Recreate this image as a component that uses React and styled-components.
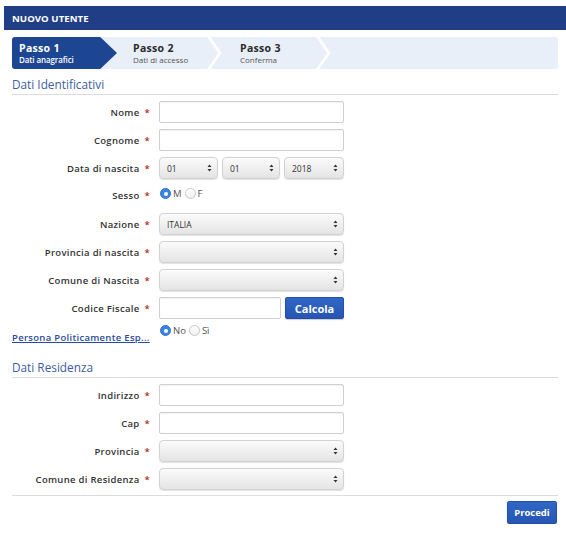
import React from "react";
import styled, { createGlobalStyle } from "styled-components";

const Global = createGlobalStyle`
  html, body { margin: 0; padding: 0; background: #fff; }
  body { font-family: "Open Sans", "Liberation Sans", sans-serif; color: #333; }
  * { box-sizing: border-box; }
`;

const Page = styled.div`
  width: 566px;
  padding-top: 6px;
`;

const Header = styled.div`
  margin-left: 4px;
  height: 24px;
  background: #1f3e85;
  display: flex;
  align-items: center;
  padding-left: 8px;
  color: #fff;
  font-weight: 700;
  font-size: 9.6px;
  letter-spacing: 0.05px;
`;

const Body = styled.div`
  padding: 0 8px 0 12px;
`;

const Steps = styled.div`
  margin-top: 7px;
  height: 32px;
  background: #e9eff9;
  border-radius: 3px;
  display: flex;
`;

const Step = styled.div`
  width: ${(p) => p.$w}px;
  height: 32px;
  display: flex;
  align-items: center;
  justify-content: space-between;
  padding-left: ${(p) => p.$pl}px;
  background: ${(p) => (p.$active ? "#1c4592" : "transparent")};
  border-radius: ${(p) => (p.$active ? "3px 0 0 3px" : "0")};
  clip-path: ${(p) =>
    p.$active ? "polygon(0 0, 84% 0, 100% 50%, 84% 100%, 0 100%)" : "none"};
`;

const StepText = styled.div`
  display: flex;
  flex-direction: column;
  line-height: 1.15;
`;

const StepTitle = styled.span`
  font-size: 10.5px;
  font-weight: 700;
  letter-spacing: 0.3px;
  color: ${(p) => (p.$active ? "#fff" : "#2b2b2b")};
`;

const StepSub = styled.span`
  font-size: 8px;
  font-weight: ${(p) => (p.$active ? 600 : 400)};
  letter-spacing: ${(p) => (p.$active ? "-0.1px" : "0")};
  color: ${(p) => (p.$active ? "#fff" : "#555")};
  margin-top: 1px;
`;

const Chevron = () => (
  <svg width="15" height="32" viewBox="0 0 15 32">
    <polyline points="1,-1 13,16 1,33" fill="none" stroke="#fff" strokeWidth="2.6" />
  </svg>
);

const SectionTitle = styled.div`
  margin-top: ${(p) => p.$mt}px;
  height: 20px;
  line-height: 18px;
  font-size: 11.8px;
  color: #3d5d9e;
  border-bottom: 1px solid #dcdcdc;
  padding-bottom: 1px;
`;

const Form = styled.div`
  margin-top: 6px;
  display: flex;
  flex-direction: column;
  gap: 6px;
`;

const Row = styled.div`
  display: grid;
  grid-template-columns: 138px 185px;
  column-gap: 9px;
  height: 22px;
  align-items: ${(p) => (p.$top ? "start" : "center")};
`;

const Label = styled.div`
  text-align: right;
  font-size: 9.5px;
  font-weight: 600;
  letter-spacing: 0.3px;
  color: #333;
  white-space: nowrap;
  padding-top: ${(p) => p.$pt || 0}px;
`;

const Star = styled.span`
  color: #b3261e;
  margin-left: 5px;
`;

const Input = styled.div`
  height: 22px;
  width: ${(p) => p.$w || 185}px;
  border: 1px solid #cfcfcf;
  border-radius: 2px;
  background: #fff;
  box-shadow: inset 0 1px 1px rgba(0, 0, 0, 0.05);
`;

const SelectBox = styled.div`
  height: 22px;
  width: ${(p) => p.$w || 185}px;
  display: flex;
  align-items: center;
  justify-content: space-between;
  padding: 0 5px 0 7px;
  border: 1px solid #d2d2d2;
  border-radius: 4px;
  background: linear-gradient(#fbfbfb, #e4e4e4);
  box-shadow: 0 1px 1px rgba(0, 0, 0, 0.12);
  font-size: 8.5px;
  color: #333;
`;

const Arrows = () => (
  <svg width="5" height="8" viewBox="0 0 5 8">
    <path d="M2.5 0.5 L4.5 3 L0.5 3 Z M2.5 7.5 L4.5 5 L0.5 5 Z" fill="#333" />
  </svg>
);

const Select = ({ w, value }) => (
  <SelectBox $w={w}>
    <span>{value}</span>
    <Arrows />
  </SelectBox>
);

const Inline = styled.div`
  display: flex;
  gap: ${(p) => p.$gap || 4}px;
  align-items: center;
`;

const Radios = styled.div`
  display: flex;
  align-items: center;
  gap: 2px;
  margin-top: ${(p) => p.$mt || 0}px;
  font-size: 9.5px;
  color: #555;
`;

const RadioDot = styled.span`
  width: 11px;
  height: 11px;
  border-radius: 50%;
  display: inline-flex;
  align-items: center;
  justify-content: center;
  margin-left: 1px;
  background: ${(p) => (p.$on ? "#3a82e3" : "linear-gradient(#fff, #f0f0f0)")};
  border: 1px solid ${(p) => (p.$on ? "#2f74d6" : "#c8c8c8")};
  &::after {
    content: "";
    width: 4px;
    height: 4px;
    border-radius: 50%;
    background: ${(p) => (p.$on ? "#fff" : "transparent")};
  }
`;

const Button = styled.button`
  height: ${(p) => p.$h}px;
  width: ${(p) => p.$w}px;
  border: 1px solid #244fa8;
  border-radius: 2px;
  background: linear-gradient(#3066c6, #2755b3);
  color: #fff;
  font-family: "Open Sans", "Liberation Sans", sans-serif;
  font-weight: 700;
  font-size: ${(p) => p.$fs}px;
  padding: 0;
  box-shadow: 0 1px 1px rgba(0, 0, 0, 0.2);
`;

const Link = styled.a`
  display: block;
  white-space: nowrap;
  font-size: 9.5px;
  font-weight: 600;
  letter-spacing: 0.3px;
  color: #2b4c9c;
  text-decoration: underline;
  padding-top: 6px;
`;

const Footer = styled.div`
  margin-top: 5px;
  border-top: 1px solid #dcdcdc;
  padding-top: 5px;
  display: flex;
  justify-content: flex-end;
  padding-right: 1px;
`;

const Field = ({ label, children, top, pt }) => (
  <Row $top={top}>
    <Label $pt={pt}>
      {label}
      <Star>*</Star>
    </Label>
    {children}
  </Row>
);

export default function App() {
  return (
    <Page>
      <Global />
      <Header>NUOVO UTENTE</Header>
      <Body>
        <Steps>
          <Step $w={105} $pl={7} $active>
            <StepText>
              <StepTitle $active>Passo 1</StepTitle>
              <StepSub $active>Dati anagrafici</StepSub>
            </StepText>
          </Step>
          <Step $w={105} $pl={16}>
            <StepText>
              <StepTitle>Passo 2</StepTitle>
              <StepSub>Dati di accesso</StepSub>
            </StepText>
            <Chevron />
          </Step>
          <Step $w={109} $pl={18}>
            <StepText>
              <StepTitle>Passo 3</StepTitle>
              <StepSub>Conferma</StepSub>
            </StepText>
            <Chevron />
          </Step>
        </Steps>

        <SectionTitle $mt={6}>Dati Identificativi</SectionTitle>
        <Form>
          <Field label="Nome">
            <Input />
          </Field>
          <Field label="Cognome">
            <Input />
          </Field>
          <Field label="Data di nascita">
            <Inline $gap={4}>
              <Select w={59} value="01" />
              <Select w={58} value="01" />
              <Select w={60} value="2018" />
            </Inline>
          </Field>
          <Field label="Sesso" top pt={4}>
            <Radios $mt={2}>
              <RadioDot $on />M<RadioDot />F
            </Radios>
          </Field>
          <Field label="Nazione">
            <Select value="ITALIA" />
          </Field>
          <Field label="Provincia di nascita">
            <Select value="" />
          </Field>
          <Field label="Comune di Nascita">
            <Select value="" />
          </Field>
          <Field label="Codice Fiscale">
            <Inline $gap={4}>
              <Input $w={122} />
              <Button $w={59} $h={22} $fs={11}>
                Calcola
              </Button>
            </Inline>
          </Field>
          <Row $top>
            <Link href="#">Persona Politicamente Esp...</Link>
            <Radios $mt={-1}>
              <RadioDot $on />No<RadioDot />Sì
            </Radios>
          </Row>
        </Form>

        <SectionTitle $mt={11}>Dati Residenza</SectionTitle>
        <Form>
          <Field label="Indirizzo">
            <Input />
          </Field>
          <Field label="Cap">
            <Input />
          </Field>
          <Field label="Provincia">
            <Select value="" />
          </Field>
          <Field label="Comune di Residenza">
            <Select value="" />
          </Field>
        </Form>
        <Footer>
          <Button $w={50} $h={23} $fs={9.5}>
            Procedi
          </Button>
        </Footer>
      </Body>
    </Page>
  );
}
